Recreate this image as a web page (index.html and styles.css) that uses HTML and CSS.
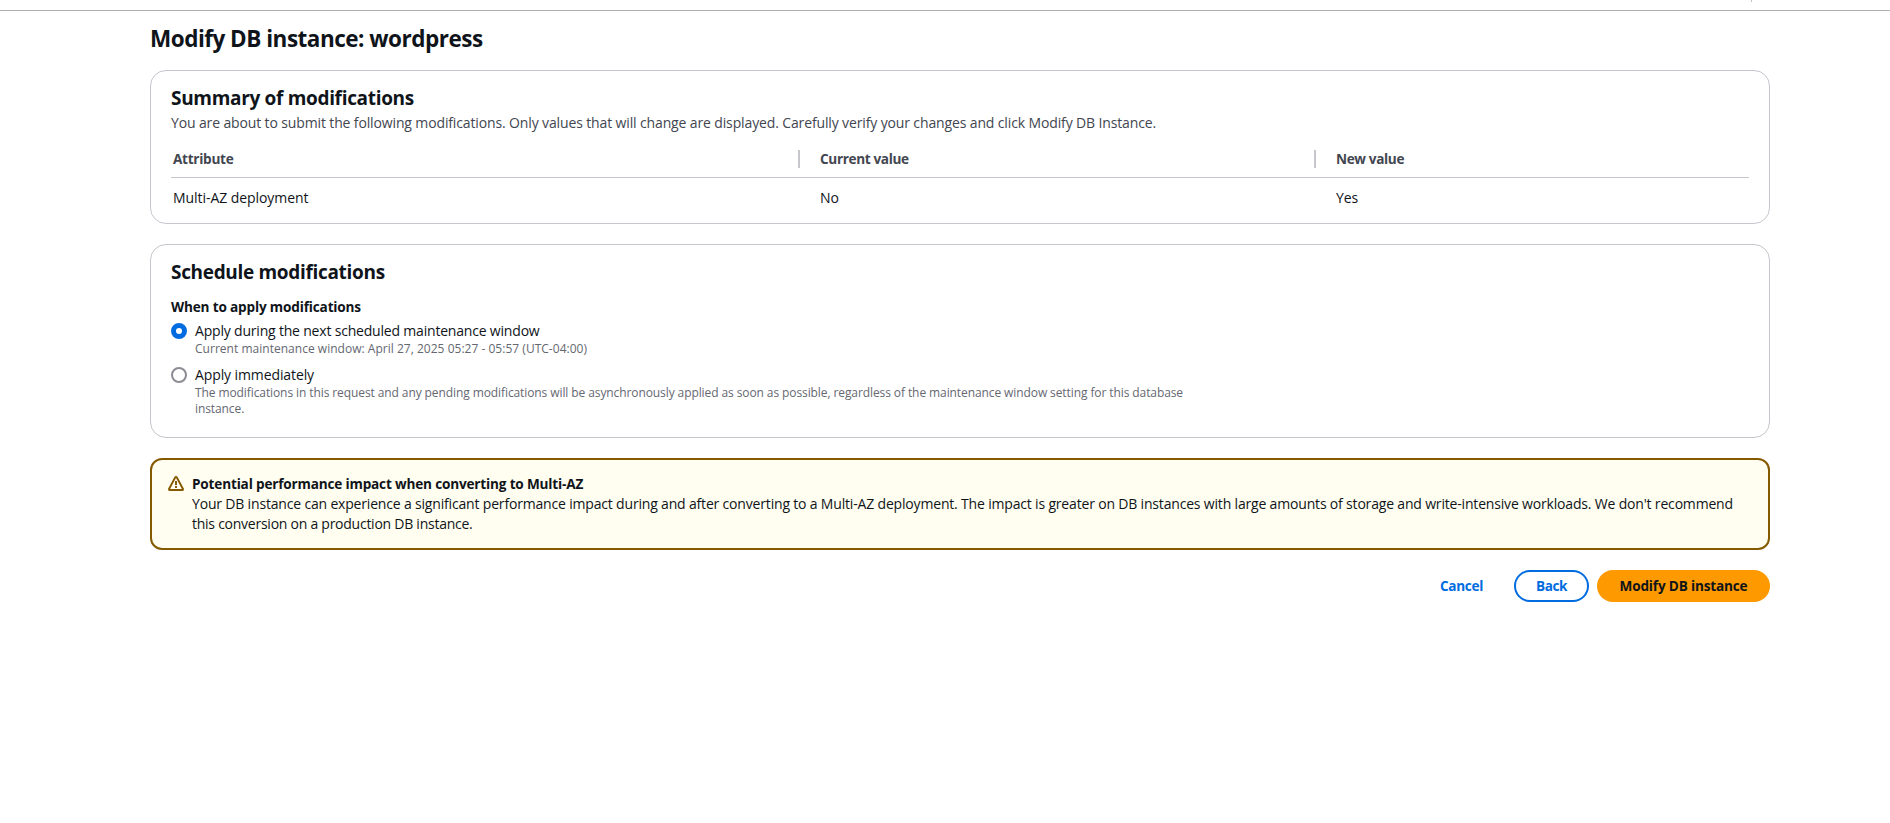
FILE: index.html
```
<!DOCTYPE html>
<html lang="en">
<head>
<meta charset="utf-8">
<title>Modify DB instance</title>
<link rel="stylesheet" href="styles.css">
</head>
<body>
<header class="topbar"><span class="topbar-tick"></span></header>
<main class="page">
  <h1 class="title">Modify DB instance: wordpress</h1>

  <section class="card summary">
    <h2 class="card-title">Summary of modifications</h2>
    <p class="desc">You are about to submit the following modifications. Only values that will change are displayed. Carefully verify your changes and click Modify DB Instance.</p>
    <div class="table">
      <div class="row head">
        <div class="cell attr">Attribute</div>
        <div class="cell split">Current value</div>
        <div class="cell split">New value</div>
      </div>
      <div class="row">
        <div class="cell">Multi-AZ deployment</div>
        <div class="cell">No</div>
        <div class="cell">Yes</div>
      </div>
    </div>
  </section>

  <section class="card schedule">
    <h2 class="card-title">Schedule modifications</h2>
    <div class="field-label">When to apply modifications</div>
    <div class="option">
      <span class="radio checked"></span>
      <div>
        <div class="option-label wide">Apply during the next scheduled maintenance window</div>
        <div class="option-hint window">Current maintenance window: April 27, 2025 05:27 - 05:57 (UTC-04:00)</div>
      </div>
    </div>
    <div class="option">
      <span class="radio"></span>
      <div>
        <div class="option-label">Apply immediately</div>
        <div class="option-hint">The modifications in this request and any pending modifications will be asynchronously applied as soon as possible, regardless of the maintenance window setting for this database<br>instance.</div>
      </div>
    </div>
  </section>

  <section class="alert">
    <svg class="alert-icon" viewBox="0 0 16 16" width="16" height="16" fill="none" stroke="#855900" stroke-width="2">
      <path stroke-linejoin="round" d="M7.1 1.6 1.2 12.6Q.7 14 2 14H14Q15.300 14 14.800 12.600L8.900 1.600Q8 .5 7.100 1.600Z"/>
      <path d="M8 5v4M8 10v2"/>
    </svg>
    <div>
      <div class="alert-title">Potential performance impact when converting to Multi-AZ</div>
      <div class="alert-text">Your DB instance can experience a significant performance impact during and after converting to a Multi-AZ deployment. The impact is greater on DB instances with large amounts of storage and write-intensive workloads. We don't recommend<br><span class="alert-tail">this conversion on a production DB instance.</span></div>
    </div>
  </section>

  <div class="actions">
    <button class="btn link">Cancel</button>
    <button class="btn normal">Back</button>
    <button class="btn primary">Modify DB instance</button>
  </div>
</main>
</body>
</html>
```
FILE: styles.css
```
* { box-sizing: border-box; }

body {
  margin: 0;
  background: #fff;
  color: #0f141a;
  font: 14px/20px "Open Sans", "Noto Sans", sans-serif;
}

.topbar {
  height: 11px;
  border-bottom: 1px solid #b0b0b0;
  display: flex;
  justify-content: flex-end;
  padding-right: 138px;
}
.topbar-tick { width: 1px; height: 2px; background: #c0c0c0; }

.page { width: 1620px; margin-left: 150px; padding-top: 13px; }

.title {
  margin: 0 0 16px;
  font-size: 22.5px;
  line-height: 30px;
  font-weight: 700;
  letter-spacing: -0.5px;
}

.card {
  border: 1px solid #c6c6cd;
  border-radius: 16px;
  padding: 15px 20px 0;
  margin-bottom: 20px;
}
.summary { height: 154px; }
.schedule { height: 194px; }

.card-title {
  margin: 0;
  font-size: 19px;
  line-height: 24px;
  font-weight: 700;
  letter-spacing: -0.32px;
}

.desc { margin: 3px 0 16px; color: #424650; letter-spacing: -0.132px; }

.row { display: grid; grid-template-columns: 629px 516px 1fr; }
.cell { padding: 10px 20px 0; letter-spacing: -0.06px; }
.cell:first-child { padding-left: 2px; }

.head { border-bottom: 1px solid #c6c6cd; height: 29px; }
.head .cell {
  height: 20px;
  padding-top: 0;
  color: #424650;
  font-size: 13.6px;
  font-weight: 700;
  letter-spacing: -0.36px;
}
.head .attr { letter-spacing: -0.28px; }
.head .split {
  background: linear-gradient(#c6c6cd, #c6c6cd) no-repeat 0 1px / 2px 18px;
}
.head .cell { margin-left: -2px; padding-left: 22px; }
.head .cell:first-child { margin-left: 0; padding-left: 2px; }

.field-label {
  margin-top: 13px;
  font-size: 13.6px;
  font-weight: 700;
  letter-spacing: -0.17px;
}

.option { display: flex; gap: 8px; margin-top: 4px; }
.option + .option { margin-top: 8px; }
.radio {
  flex: none;
  width: 16px;
  height: 16px;
  margin-top: 2px;
  border: 2px solid #8c8c94;
  border-radius: 50%;
}
.radio.checked { border: 5px solid #006ce0; }
.option-label { letter-spacing: -0.104px; }
.option-label.wide { letter-spacing: -0.192px; }
.option-hint {
  color: #656871;
  font-size: 12px;
  line-height: 16px;
  letter-spacing: -0.094px;
}
.option-hint.window { letter-spacing: 0.021px; }

.alert {
  display: flex;
  gap: 8px;
  height: 92px;
  padding: 14px 16px;
  border: 2px solid #855900;
  border-radius: 12px;
  background: #fffef0;
}
.alert-icon { flex: none; margin-top: 2px; }
.alert-title { font-size: 13.6px; font-weight: 700; letter-spacing: -0.18px; }
.alert-text { white-space: nowrap; letter-spacing: -0.177px; }
.alert-tail { letter-spacing: -0.252px; }

.actions { display: flex; justify-content: flex-end; gap: 8px; margin-top: 20px; }
.btn {
  height: 32px;
  padding: 0;
  border: 2px solid transparent;
  border-radius: 20px;
  background: transparent;
  font: 700 13.6px/20px "Open Sans", "Noto Sans", sans-serif;
}
.link { width: 89px; color: #006ce0; letter-spacing: -0.33px; }
.normal { width: 75px; border-color: #006ce0; color: #006ce0; letter-spacing: -0.4px; }
.primary { width: 173px; background: #ff9900; color: #0f141a; letter-spacing: -0.18px; }
```
